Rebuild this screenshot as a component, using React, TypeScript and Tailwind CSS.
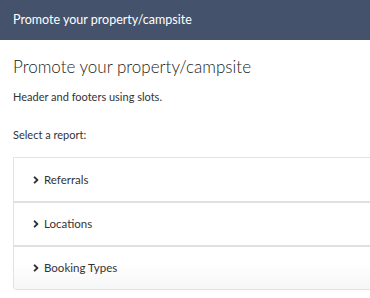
import { FaAngleRight } from "react-icons/fa";

const reports = ["Referrals", "Locations", "Booking Types"];

export default function App() {
  return (
    <div className="min-h-[298px] w-[370px] overflow-hidden bg-white font-['Lato',sans-serif] text-[#333]">
      <div className="flex h-10 items-center bg-[#44536b] px-[13px] text-[12.5px] text-white">
        Promote your property/campsite
      </div>
      <div className="pl-[13px]">
        <h1 className="mt-[16px] text-[17px] font-light leading-[22px] text-[#222]">
          Promote your property/campsite
        </h1>
        <p className="mt-[12px] text-[11px] leading-[14px]">Header and footers using slots.</p>
        <p className="mt-[24px] text-[11px] leading-[14px]">Select a report:</p>
        <div className="mt-[15px] w-[380px] rounded-b-[3px] border border-[#e2e2e2]">
          {reports.map((r, i) => (
            <div
              key={r}
              className={
                "flex items-center gap-[3px] pl-[17px] text-[11.5px] " +
                (i > 0 ? "h-[44px] border-t-2 border-[#e0e0e0] " : "h-[43px] ") +
                (i === reports.length - 1 ? "bg-gradient-to-b from-white from-40% to-[#f6f6f6]" : "")
              }
            >
              <FaAngleRight className="h-[12px] w-[10px] text-[#333]" />
              <span>{r}</span>
            </div>
          ))}
        </div>
      </div>
    </div>
  );
}
